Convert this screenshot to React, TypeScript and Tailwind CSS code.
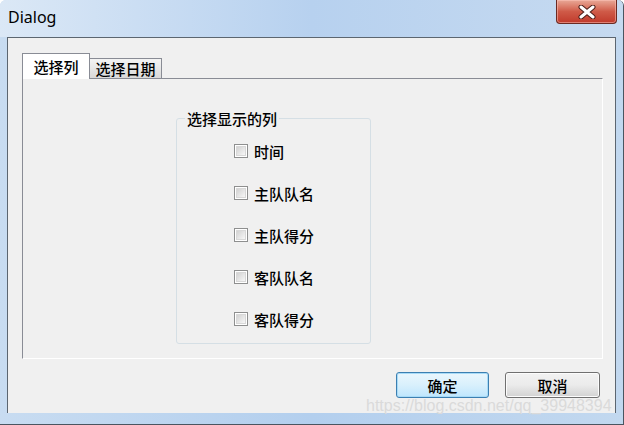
const columns = ["时间", "主队队名", "主队得分", "客队队名", "客队得分"];

function CheckRow({ label }: { label: string }) {
  return (
    <div className="flex h-5 items-center gap-[6px]">
      <span className="h-[14px] w-[14px] border border-[#8e8f8f] bg-white p-px">
        <span className="block h-full w-full border border-[#d8d8d8] bg-gradient-to-br from-[#d2d2d2] to-[#f7f7f7]" />
      </span>
      <span className="text-[15px] font-medium leading-none text-black">{label}</span>
    </div>
  );
}

export default function App() {
  return (
    <div
      className="relative flex h-[425px] w-[624px] flex-col overflow-hidden rounded-t-[6px] border-b border-r border-[#4a5560] bg-gradient-to-r from-[#c8dcf1] via-[#b3cfee] to-[#c2d8ef]"
      style={{ fontFamily: '"Noto Sans CJK SC", "Noto Sans", sans-serif' }}
    >
      {/* title bar */}
      <div className="flex h-[37px] items-start justify-between bg-gradient-to-r from-[#dbe8f6] via-[#b7d1ef] to-[#c6daf0]">
        <span
          className="mt-[7px] pl-[8px] text-[16px] leading-5 text-black"
          style={{ fontFamily: '"Noto Sans", sans-serif' }}
        >
          Dialog
        </span>
        <div className="mr-[6px] flex h-[24px] w-[61px] items-center justify-center rounded-b-[4px] border border-t-0 border-[#6b2a22] bg-gradient-to-b from-[#e8a897] via-[#cf5a48] to-[#c0392b] shadow-[inset_0_0_0_1px_rgba(255,200,190,0.5)]">
          <svg width="18" height="14" viewBox="0 0 18 14">
            <path d="M3 2 L15 12 M15 2 L3 12" stroke="#4a1d18" strokeWidth="5" strokeLinecap="round" />
            <path d="M3 2 L15 12 M15 2 L3 12" stroke="#ffffff" strokeWidth="3" strokeLinecap="round" />
          </svg>
        </div>
      </div>

      {/* client area */}
      <div className="mx-[7px] flex h-[376px] flex-col border border-b-0 border-[#5c6670] bg-[#f0f0f0] px-[14px] pt-[14px]">
        {/* tabs */}
        <div className="flex h-[26px] items-end">
          <div className="relative z-10 -mb-px flex h-[26px] w-[68px] items-center justify-center border border-b-0 border-[#898c95] bg-white text-[15px] font-medium leading-none">
            选择列
          </div>
          <div className="flex h-[20px] w-[72px] items-center justify-center border border-b-0 border-l-0 border-[#898c95] bg-gradient-to-b from-[#f4f4f4] to-[#d9d9d9] text-[15px] font-medium leading-none">
            选择日期
          </div>
        </div>

        {/* panel */}
        <div className="h-[281px] w-[581px] border border-[#898c95] border-b-white border-r-white bg-[#f0f0f0] pl-[153px] pt-[39px]">
          <div className="relative h-[226px] w-[195px] rounded-[3px] border border-[#d5dfe5] pl-[57px] pt-[22px]">
            <span className="absolute -top-[10px] left-[8px] bg-[#f0f0f0] px-[2px] text-[15px] font-medium leading-5 text-black">
              选择显示的列
            </span>
            <div className="flex flex-col gap-[22px]">
              {columns.map((c) => (
                <CheckRow key={c} label={c} />
              ))}
            </div>
          </div>
        </div>

        {/* buttons */}
        <div className="mt-[13px] flex justify-end gap-[16px] pr-px">
          <button className="flex h-[26px] w-[93px] items-center justify-center rounded-[3px] border border-[#3c7fb1] bg-gradient-to-b from-[#eaf6fd] via-[#d9f0fc] to-[#bee6fd] text-[15px] font-medium leading-none text-black shadow-[inset_0_0_0_1px_#a8dbf7]">
            确定
          </button>
          <button className="flex h-[26px] w-[95px] items-center justify-center rounded-[3px] border border-[#707070] bg-gradient-to-b from-[#f2f2f2] via-[#ebebeb] to-[#d2d2d2] text-[15px] font-medium leading-none text-black shadow-[inset_0_0_0_1px_#fcfcfc]">
            取消
          </button>
        </div>
      </div>

      {/* watermark */}
      <span
        className="absolute left-[366px] top-[396px] text-[16px] leading-5 text-[#dadada]"
        style={{ fontFamily: '"Liberation Sans", Arial, sans-serif' }}
      >
        https://blog.csdn.net/qq_39948394
      </span>
    </div>
  );
}
